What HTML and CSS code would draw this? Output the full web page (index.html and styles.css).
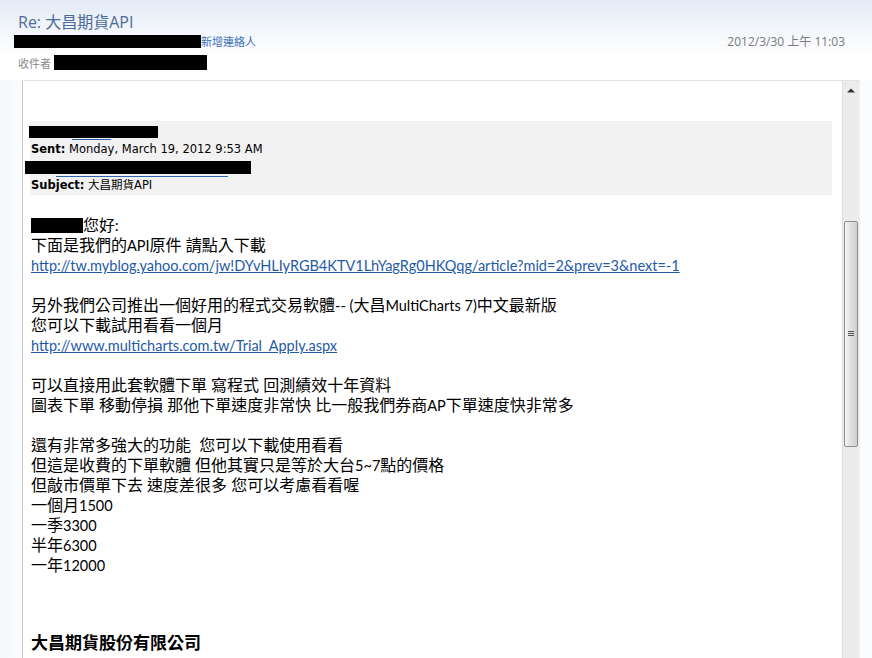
FILE: index.html
```html
<!DOCTYPE html>
<html lang="zh-Hant">
<head>
  <meta charset="UTF-8" />
  <title>Re: 大昌期貨API</title>
  <link rel="stylesheet" href="styles.css">
</head>
<body>

  <!-- 郵件標頭 -->
  <header class="encabezado">
    <h1 class="asunto">Re: 大昌期貨API</h1>
    <div class="fila-remitente">
      <span class="tachado remitente"></span><a href="#" class="agregar">新增連絡人</a>
      <span class="fecha">2012/3/30 上午 11:03</span>
    </div>
    <div class="fila-destino">
      <span class="etiqueta">收件者</span><span class="tachado destino"></span>
    </div>
  </header>

  <div class="zona">
    <div class="margen"></div>

    <!-- Cuerpo del mensaje -->
    <section class="mensaje">
      <div class="contenido">
        <div class="citado">
          <div class="linea"><span class="tachado t1"></span><span class="subrayado s1"></span></div>
          <div class="linea"><b>Sent:</b> Monday, March 19, 2012 9:53 AM</div>
          <div class="linea"><span class="tachado t2"></span><span class="subrayado s2"></span></div>
          <div class="linea"><b>Subject:</b> 大昌期貨API</div>
        </div>

        <div class="texto">
          <p><span class="tachado t3"></span>您好<span class="en">:</span><br>
          下面是我們的<span class="en">API</span>原件 請點入下載<br>
          <a href="#">http://tw.myblog.yahoo.com/jw!DYvHLIyRGB4KTV1LhYagRg0HKQqg/article?mid=2&amp;prev=3&amp;next=-1</a></p>

          <p>另外我們公司推出一個好用的程式交易軟體<span class="en">-- (</span>大昌<span class="en">MultiCharts 7)</span>中文最新版<br>
          您可以下載試用看看一個月<br>
          <a href="#">http://www.multicharts.com.tw/Trial_Apply.aspx</a></p>

          <p>可以直接用此套軟體下單 寫程式 回測績效十年資料<br>
          圖表下單 移動停損 那他下單速度非常快 比一般我們券商<span class="en">AP</span>下單速度快非常多</p>

          <p>還有非常多強大的功能 &nbsp;您可以下載使用看看<br>
          但這是收費的下單軟體 但他其實只是等於大台<span class="en">5~7</span>點的價格<br>
          但敲市價單下去 速度差很多 您可以考慮看看喔<br>
          一個月<span class="en">1500</span><br>
          一季<span class="en">3300</span><br>
          半年<span class="en">6300</span><br>
          一年<span class="en">12000</span></p>

          <p class="empresa">大昌期貨股份有限公司</p>
        </div>
      </div>

      <!-- Barra de desplazamiento -->
      <div class="barra">
        <div class="flecha">
          <svg width="8" height="5" viewBox="0 0 8 5"><path d="M0 4.5 L4 0.5 L8 4.5 Z" fill="#333"/></svg>
        </div>
        <div class="pista">
          <div class="pulgar">
            <span class="agarre"></span>
          </div>
        </div>
      </div>
    </section>

    <div class="margen-der"></div>
  </div>

</body>
</html>
```

FILE: styles.css
```css
html, body {
  margin: 0;
  height: 100%;
}
body {
  font-family: "Open Sans", "Noto Sans CJK TC", sans-serif;
  background-color: #fff;
  overflow: hidden;
  display: flex;
  flex-direction: column;
}
.encabezado {
  height: 80px;
  box-sizing: border-box;
  padding: 11px 27px 0 14px;
  background: linear-gradient(#e3ebf6, #ffffff 70%);
  flex-shrink: 0;
}
.asunto {
  margin: 0 0 0 4px;
  font-size: 16px;
  font-weight: normal;
  color: #4d6b98;
  line-height: 22px;
}
.fila-remitente {
  display: flex;
  align-items: center;
  height: 14px;
  margin-top: 1px;
}
.tachado {
  display: inline-block;
  background-color: #000;
}
.remitente {
  width: 187px;
  height: 13px;
}
.agregar {
  font-size: 11px;
  color: #3b6fb6;
  text-decoration: none;
}
.fecha {
  margin-left: auto;
  font-size: 12px;
  color: #7a7a7a;
}
.fila-destino {
  display: flex;
  align-items: center;
  margin: 7px 0 0 4px;
  height: 15px;
}
.etiqueta {
  font-size: 11px;
  color: #8a8a8a;
  width: 36px;
}
.destino {
  width: 153px;
  height: 15px;
}
.zona {
  flex: 1;
  display: flex;
  min-height: 0;
}
.margen {
  width: 22px;
  background: linear-gradient(90deg, #f4f7fb, #fbfcfe);
  flex-shrink: 0;
}
.margen-der {
  width: 12px;
  background-color: #fbfcfe;
  border-left: 1px solid #edf0f4;
  flex-shrink: 0;
}
.mensaje {
  flex: 1;
  display: flex;
  border-left: 1px solid #c8c8c8;
  border-top: 1px solid #e2e2e2;
  min-height: 0;
}
.contenido {
  flex: 1;
  padding: 40px 10px 0 7px;
  overflow: hidden;
}
.citado {
  background-color: #f2f2f2;
  padding: 1px 0 1px 1px;
  font-family: "DejaVu Sans", "Noto Sans CJK TC", sans-serif;
  font-size: 11.5px;
  color: #000;
}
.citado .linea {
  height: 18px;
  line-height: 18px;
  position: relative;
}
.t1 {
  width: 129px;
  height: 12px;
  margin-left: -2px;
  vertical-align: middle;
}
.t2 {
  width: 226px;
  height: 13px;
  margin-left: -6px;
  vertical-align: middle;
}
.subrayado {
  position: absolute;
  height: 1px;
  background-color: #2d63b0;
}
.s1 {
  left: 41px;
  width: 39px;
  bottom: 0;
}
.s2 {
  left: 25px;
  width: 172px;
  bottom: -1px;
}
.texto {
  padding-left: 1px;
  font-family: "Lato", "Noto Sans CJK TC", sans-serif;
  font-size: 16px;
  line-height: 20px;
  color: #000;
}
.texto p {
  margin: 20px 0 0;
}
.texto p:first-child {
  margin-top: 20px;
}
.texto .en,
.texto a {
  font-size: 14.5px;
  line-height: 0;
}
.texto a {
  color: #1f5aa8;
  text-decoration: underline;
}
.t3 {
  width: 52px;
  height: 15px;
  vertical-align: -2px;
}
.empresa {
  font-weight: bold;
  font-size: 17px;
  padding-top: 38px;
}
.barra {
  width: 16px;
  background-color: #ececec;
  border-left: 1px solid #e0e0e0;
  display: flex;
  flex-direction: column;
  flex-shrink: 0;
}
.flecha {
  height: 18px;
  display: flex;
  align-items: center;
  justify-content: center;
}
.pista {
  flex: 1;
  padding-top: 122px;
}
.pulgar {
  height: 224px;
  margin: 0 1px;
  border: 1px solid #8f8f8f;
  border-radius: 2px;
  background: linear-gradient(90deg, #f4f4f4, #dedede 50%, #cfcfcf);
  display: flex;
  align-items: center;
  justify-content: center;
}
.agarre {
  width: 6px;
  height: 6px;
  background: repeating-linear-gradient(#555 0 1px, transparent 1px 2px);
}
```
